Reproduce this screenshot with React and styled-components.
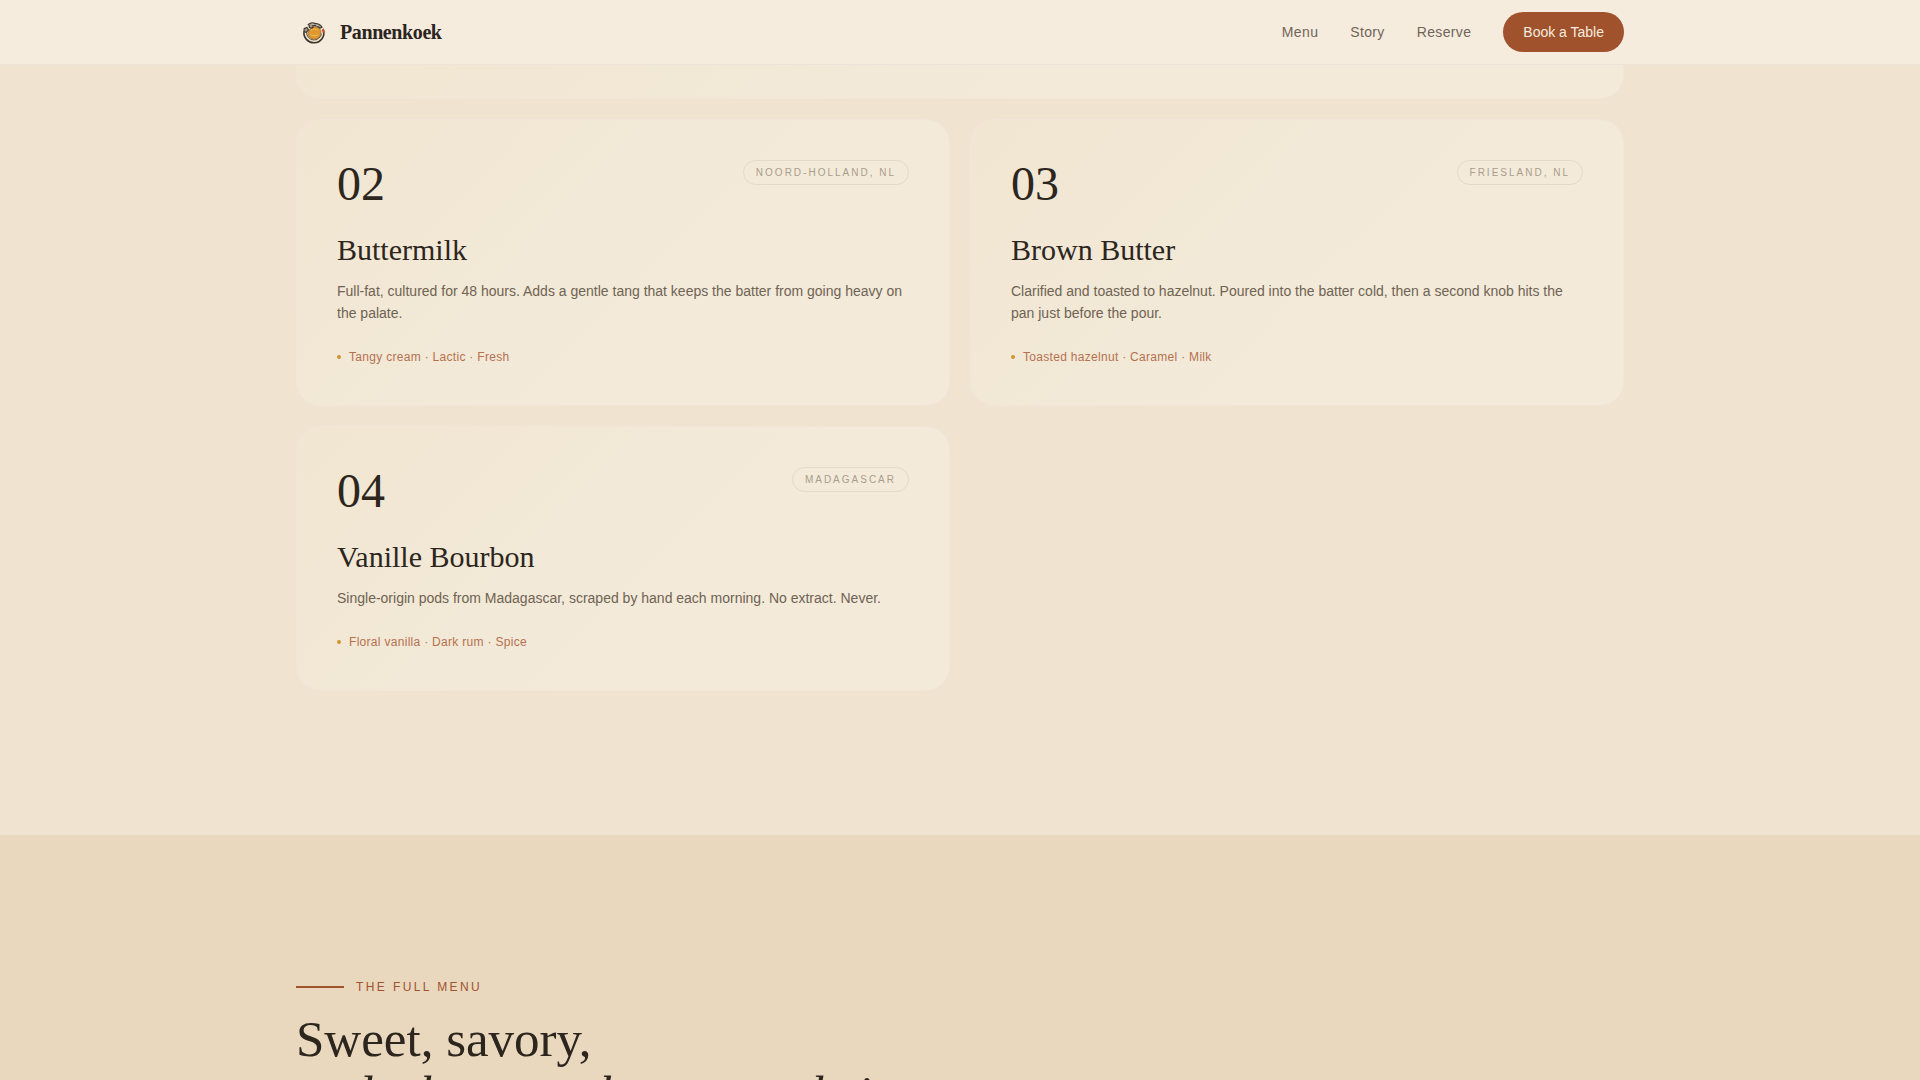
import React from 'react';
import styled, { createGlobalStyle } from 'styled-components';

const GlobalStyle = createGlobalStyle`
  * {
    margin: 0;
    padding: 0;
    box-sizing: border-box;
  }
  body {
    background: #f0e3cf;
    color: #2c261e;
    font-family: 'Liberation Sans', Arial, sans-serif;
    font-size: 14px;
  }
`;

const Page = styled.div`
  height: 100vh;
  overflow: hidden;
`;

const Container = styled.div`
  width: min(1328px, 100% - 48px);
  margin: 0 auto;
`;

const HeaderStyle = styled.header`
  position: fixed;
  top: 0;
  left: 0;
  right: 0;
  z-index: 10;
  background: #f5ecde;
  border-bottom: 1px solid #ece4d8;
  .header__inner {
    display: flex;
    align-items: center;
    justify-content: space-between;
    padding: 12px 0;
  }
`;

const Brand = styled.a`
  display: flex;
  align-items: center;
  gap: 8px;
  color: #2c2420;
  font-family: 'Liberation Serif', 'Times New Roman', serif;
  font-size: 20px;
  font-weight: 700;
  letter-spacing: -0.02em;
  text-decoration: none;
`;

const Nav = styled.nav`
  display: flex;
  align-items: center;
  gap: 32px;
`;

const NavLink = styled.a`
  color: #70655a;
  font-size: 14px;
  letter-spacing: 0.025em;
  text-decoration: none;
`;

const BookButton = styled.button`
  height: 40px;
  padding: 0 20px;
  border: none;
  border-radius: 20px;
  background: #a0522d;
  color: #f5ecdf;
  font-family: inherit;
  font-size: 14px;
  cursor: pointer;
`;

const IngredientsSection = styled.section`
  padding-bottom: 144px;
  .ingredients__grid {
    display: grid;
    grid-template-columns: 1fr 1fr;
    gap: 20px;
  }
  @media only screen and (max-width: 768px) {
    .ingredients__grid {
      grid-template-columns: 1fr;
    }
  }
`;

const Card = styled.article`
  padding: 40px;
  border: 1px solid #f0e6da;
  border-radius: 24px;
  background: linear-gradient(135deg, #f1e6d1 0%, #f3eada 60%, #f3eada 100%);
`;

const FeaturedCard = styled(Card)`
  grid-column: 1 / -1;
  min-height: 99px;
  border-top: none;
  border-radius: 0 0 24px 24px;
`;

const CardHead = styled.div`
  display: flex;
  align-items: flex-start;
  justify-content: space-between;
  margin-bottom: 24px;
`;

const Number = styled.span`
  font-family: 'Liberation Serif', 'Times New Roman', serif;
  font-size: 48px;
  line-height: 48px;
`;

const Origin = styled.span`
  padding: 6px 12px;
  border: 1px solid #e4daca;
  border-radius: 20px;
  color: #a99d8c;
  font-size: 10px;
  line-height: 11px;
  letter-spacing: 2px;
  text-transform: uppercase;
`;

const CardTitle = styled.h3`
  margin-bottom: 12px;
  font-family: 'Liberation Serif', 'Times New Roman', serif;
  font-size: 30px;
  font-weight: 400;
  line-height: 36px;
`;

const CardText = styled.p`
  margin-bottom: 25px;
  color: #6f6353;
  font-size: 14px;
  line-height: 22px;
`;

const Notes = styled.p`
  display: flex;
  align-items: center;
  gap: 8px;
  color: #b5714f;
  font-size: 12px;
  line-height: 16px;
  letter-spacing: 0.025em;
  &::before {
    content: '';
    width: 4px;
    height: 4px;
    border-radius: 50%;
    background: #cf9430;
  }
`;

const MenuSection = styled.section`
  padding: 144px 0;
  background: #e9d8be;
`;

const Eyebrow = styled.p`
  display: flex;
  align-items: center;
  gap: 12px;
  margin-bottom: 17px;
  color: #a0522d;
  font-size: 12px;
  line-height: 16px;
  letter-spacing: 0.2em;
  text-transform: uppercase;
  &::before {
    content: '';
    width: 48px;
    height: 2px;
    background: #a0522d;
  }
`;

const Heading = styled.h2`
  font-family: 'Liberation Serif', 'Times New Roman', serif;
  font-size: 51px;
  font-weight: 400;
  line-height: 55px;
`;

const ingredients = [
  {
    number: '02',
    origin: 'Noord-Holland, NL',
    title: 'Buttermilk',
    text: 'Full-fat, cultured for 48 hours. Adds a gentle tang that keeps the batter from going heavy on the palate.',
    notes: 'Tangy cream · Lactic · Fresh',
  },
  {
    number: '03',
    origin: 'Friesland, NL',
    title: 'Brown Butter',
    text: 'Clarified and toasted to hazelnut. Poured into the batter cold, then a second knob hits the pan just before the pour.',
    notes: 'Toasted hazelnut · Caramel · Milk',
  },
  {
    number: '04',
    origin: 'Madagascar',
    title: 'Vanille Bourbon',
    text: 'Single-origin pods from Madagascar, scraped by hand each morning. No extract. Never.',
    notes: 'Floral vanilla · Dark rum · Spice',
  },
];

function Logo() {
  return (
    <svg width="36" height="36" viewBox="0 0 36 36" fill="none" aria-hidden="true">
      <circle cx="18" cy="19" r="9.5" fill="#efe0c4" />
      <path d="M8 17.5a10 10 0 1 0 19.6-1.2" stroke="#3a3531" strokeWidth="1.6" />
      <path d="M10.6 18a7.5 7.5 0 0 0 14.9 1.6" stroke="#5a5248" strokeWidth="1" />
      <path
        d="M18 12.6l4.4.8 2.4 3-.2 4.6-2.8 3.4-4.4.8-4-2-1.4-3.6 1.6-4z"
        fill="#de982f"
        stroke="#a06c2c"
        strokeWidth="0.8"
      />
      <path d="M14.5 16.5c2.5-2 5.5-2 7.5-.5M14 20c2.5 2 5 2.4 8 .8" stroke="#f1bb55" strokeWidth="1" />
      <g stroke="#3f3a35" strokeWidth="1.2" fill="#a69c8a">
        <path d="M8.2 14.6l2.6-1.2 1.8 2.6-2.4 2.4-2.2-.8z" />
        <circle cx="15.2" cy="12" r="2" />
        <path d="M11.8 11.2c1.2-2.2 4.4-2.8 7.2-1.8 3 .2 5.8 1.6 7 3.8l-2 .8-3.6-2.2-4-.8" />
      </g>
      <path d="M15.8 10l2.4.4M20 11l2.4 1" stroke="#e8dcc8" strokeWidth="0.8" />
      <path d="M26 15.6l2-1.4.4 4-1.8.6z" fill="#cc4c32" />
    </svg>
  );
}

function Header() {
  return (
    <HeaderStyle>
      <Container className="header__inner">
        <Brand href="#top">
          <Logo />
          Pannenkoek
        </Brand>
        <Nav>
          <NavLink href="#menu">Menu</NavLink>
          <NavLink href="#story">Story</NavLink>
          <NavLink href="#reserve">Reserve</NavLink>
          <BookButton type="button">Book a Table</BookButton>
        </Nav>
      </Container>
    </HeaderStyle>
  );
}

function IngredientCard({ number, origin, title, text, notes }) {
  return (
    <Card>
      <CardHead>
        <Number>{number}</Number>
        <Origin>{origin}</Origin>
      </CardHead>
      <CardTitle>{title}</CardTitle>
      <CardText>{text}</CardText>
      <Notes>{notes}</Notes>
    </Card>
  );
}

export default function App() {
  return (
    <Page id="top">
      <GlobalStyle />
      <Header />
      <main>
        <IngredientsSection id="story">
          <Container className="ingredients__grid">
            <FeaturedCard />
            {ingredients.map((item) => (
              <IngredientCard key={item.number} {...item} />
            ))}
          </Container>
        </IngredientsSection>
        <MenuSection id="menu">
          <Container>
            <Eyebrow>The Full Menu</Eyebrow>
            <Heading>
              Sweet, savory,
              <br />
              <em>and whatever the season brings.</em>
            </Heading>
          </Container>
        </MenuSection>
      </main>
    </Page>
  );
}
